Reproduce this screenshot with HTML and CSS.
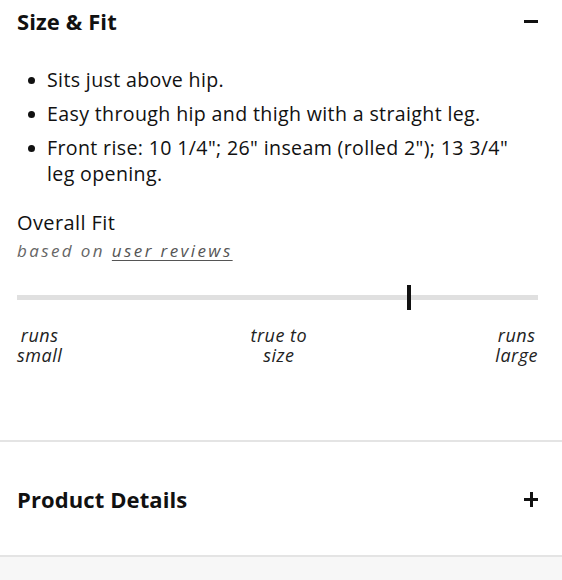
FILE: index.html
```html
<!DOCTYPE html>
<html>
<head>
<meta charset="utf-8">
<link rel="stylesheet" href="styles.css">
</head>
<body>
<section class="panel open">
  <div class="panel-head">
    <h2 class="panel-title">Size &amp; Fit</h2>
    <span class="toggle minus"></span>
  </div>
  <ul class="bullets">
    <li>Sits just above hip.</li>
    <li>Easy through hip and thigh with a straight leg.</li>
    <li>Front rise: 10 1/4"; 26" inseam (rolled 2"); 13 3/4" leg opening.</li>
  </ul>
  <div class="fit">
    <div class="fit-title">Overall Fit</div>
    <div class="fit-sub">based on <a class="fit-link">user reviews</a></div>
    <div class="track"><span class="marker" style="left: 75.3%"></span></div>
    <div class="scale">
      <span class="lbl"><span class="ln">runs</span><span class="ln">small</span></span>
      <span class="lbl"><span class="ln">true to</span><span class="ln">size</span></span>
      <span class="lbl"><span class="ln">runs</span><span class="ln">large</span></span>
    </div>
  </div>
</section>
<section class="panel closed">
  <div class="panel-head">
    <h2 class="panel-title">Product Details</h2>
    <span class="toggle plus"></span>
  </div>
</section>
<div class="footer-bg"></div>
</body>
</html>
```
FILE: styles.css
```css
html, body { margin: 0; padding: 0; background: #fff; }
body { font-family: "Open Sans", sans-serif; color: #111; width: 562px; }
.panel { padding: 0 24px 0 17px; }
.panel.open { border-bottom: 2px solid #e4e4e4; height: 442px; box-sizing: border-box; }
.panel-head { display: flex; justify-content: space-between; align-items: center; }
.panel.open .panel-head { height: 42px; }
.panel-title { margin: 0; font-family: "Open Sans", sans-serif; font-weight: 700; font-size: 22px; letter-spacing: 0.1px; }
.toggle { position: relative; width: 14px; height: 15px; display: block; }
.toggle::before { content: ""; position: absolute; left: 0; top: 6px; width: 14px; height: 3px; background: #111; }
.plus::after { content: ""; position: absolute; left: 5.5px; top: 0; width: 3px; height: 15px; background: #111; }
.panel.closed .toggle { margin-top: 2px; }
.bullets { list-style: none; margin: 25px 0 0; padding: 0 0 0 30px; font-size: 19.6px; line-height: 26px; letter-spacing: 0.35px; }
.bullets li { position: relative; margin-bottom: 8px; }
.bullets li::before { content: ""; position: absolute; left: -19px; top: 10px; width: 7px; height: 7px; border-radius: 50%; background: #111; }
.fit { margin-top: 23px; }
.fit-title { font-size: 20px; line-height: 26px; letter-spacing: 0.4px; }
.fit-sub { font-size: 17px; font-style: italic; color: #666; letter-spacing: 2.4px; line-height: 26px; margin-top: 2px; }
.fit-link { color: #555; text-decoration: underline; text-underline-offset: 3px; }
.track { position: relative; height: 5px; background: #e0e0e0; margin-top: 31px; }
.marker { position: absolute; top: -10px; width: 4px; height: 25px; margin-left: -2px; background: #111; }
.scale { display: flex; justify-content: space-between; margin-top: 25px; }
.lbl { display: flex; flex-direction: column; align-items: center; font-size: 18px; font-style: italic; letter-spacing: 0.5px; line-height: 20px; color: #222; }
.ln { display: block; height: 20px; }
.panel.closed { height: 115px; border-bottom: 2px solid #e4e4e4; display: flex; flex-direction: column; justify-content: center; box-sizing: border-box; }
.footer-bg { background: #f7f7f7; height: 40px; }
```
